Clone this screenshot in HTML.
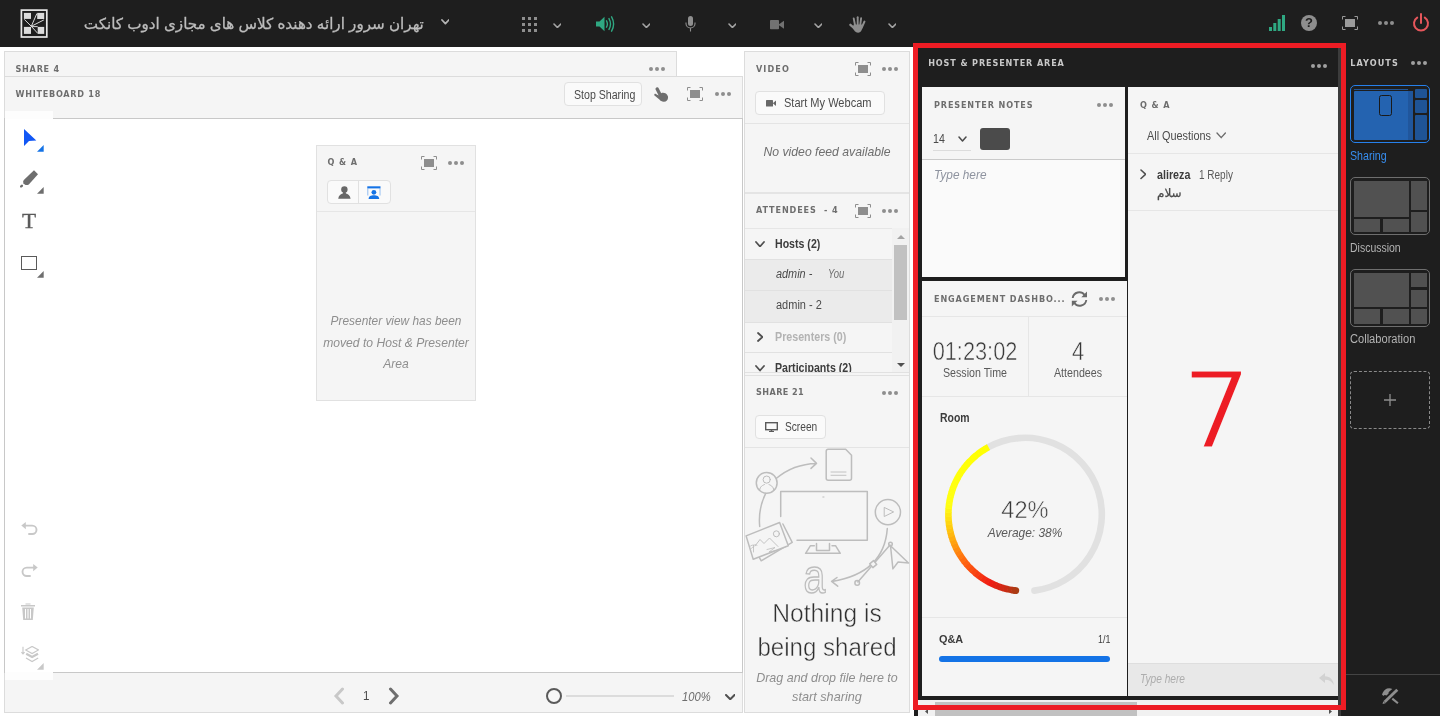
<!DOCTYPE html>
<html><head><meta charset="utf-8"><title>Adobe Connect</title>
<style>
html,body{margin:0;padding:0;}
body{width:1440px;height:716px;overflow:hidden;background:#fff;position:relative;font-family:"Liberation Sans","DejaVu Sans",sans-serif;}
#app{position:absolute;left:0;top:0;width:1440px;height:716px;overflow:hidden;will-change:transform;}
.b{position:absolute;box-sizing:border-box;display:block;}
.t{position:absolute;white-space:nowrap;line-height:1;}
.h{font-weight:bold;}
</style></head><body><div id="app">
<div class="b" style="left:0px;top:0px;width:1440px;height:47px;background:#1e1e1e;"></div>
<svg class="b" style="left:20px;top:9px;" width="28" height="29" viewBox="0 0 28 29"><rect x="1.4" y="1.1" width="25.4" height="26.9" fill="none" stroke="#e8e8e8" stroke-width="1.7"/>
<rect x="3.9" y="3.9" width="7.1" height="6" fill="#dcdcdc"/><rect x="17.200" y="3.900" width="7" height="6.100" fill="#dcdcdc"/>
<rect x="3.900" y="17.900" width="7.100" height="7" fill="#dcdcdc"/><rect x="17.700" y="17.900" width="6.500" height="7" fill="#dcdcdc"/>
<path d="M11.300 17.300L4.300 10.400M11.300 17.300L16.900 4.500M11.300 17.300L23.900 10.900M11.300 17.300L17.700 24.300M11.300 17.600H17.700" stroke="#d8d8d8" stroke-width="1" fill="none"/></svg>
<div class="t " style="left:83.8px;top:16px;font-size:15.15px;color:#bdbdbd;direction:rtl;-webkit-text-stroke:0.3px;">تهران سرور ارائه دهنده کلاس های مجازی ادوب کانکت</div>
<svg class="b" style="left:440.6px;top:19.3px;" width="8.8" height="5.6" viewBox="0 0 8.8 5.6"><path d="M1 1L4.4 4.6L7.8 1" fill="none" stroke="#b4b4b4" stroke-width="1.8" stroke-linecap="round" stroke-linejoin="round"/></svg>
<svg class="b" style="left:522px;top:17px;" width="15" height="15" viewBox="0 0 15 15"><rect x="0" y="0" width="3" height="3" fill="#8e8e8e"/><rect x="0" y="6" width="3" height="3" fill="#8e8e8e"/><rect x="0" y="12" width="3" height="3" fill="#8e8e8e"/><rect x="6" y="0" width="3" height="3" fill="#8e8e8e"/><rect x="6" y="6" width="3" height="3" fill="#8e8e8e"/><rect x="6" y="12" width="3" height="3" fill="#8e8e8e"/><rect x="12" y="0" width="3" height="3" fill="#8e8e8e"/><rect x="12" y="6" width="3" height="3" fill="#8e8e8e"/><rect x="12" y="12" width="3" height="3" fill="#8e8e8e"/></svg>
<svg class="b" style="left:552.7px;top:22.55px;" width="8.8" height="5.5" viewBox="0 0 8.8 5.5"><path d="M1 1L4.4 4.5L7.8 1" fill="none" stroke="#a4a4a4" stroke-width="1.6" stroke-linecap="round" stroke-linejoin="round"/></svg>
<svg class="b" style="left:641.7px;top:22.55px;" width="8.8" height="5.5" viewBox="0 0 8.8 5.5"><path d="M1 1L4.4 4.5L7.8 1" fill="none" stroke="#a4a4a4" stroke-width="1.6" stroke-linecap="round" stroke-linejoin="round"/></svg>
<svg class="b" style="left:727.7px;top:22.55px;" width="8.8" height="5.5" viewBox="0 0 8.8 5.5"><path d="M1 1L4.4 4.5L7.8 1" fill="none" stroke="#a4a4a4" stroke-width="1.6" stroke-linecap="round" stroke-linejoin="round"/></svg>
<svg class="b" style="left:813.7px;top:22.55px;" width="8.8" height="5.5" viewBox="0 0 8.8 5.5"><path d="M1 1L4.4 4.5L7.8 1" fill="none" stroke="#a4a4a4" stroke-width="1.6" stroke-linecap="round" stroke-linejoin="round"/></svg>
<svg class="b" style="left:887.7px;top:22.55px;" width="8.8" height="5.5" viewBox="0 0 8.8 5.5"><path d="M1 1L4.4 4.5L7.8 1" fill="none" stroke="#a4a4a4" stroke-width="1.6" stroke-linecap="round" stroke-linejoin="round"/></svg>
<svg class="b" style="left:596px;top:16px;" width="19" height="16" viewBox="0 0 19 16"><path d="M0 5.5H3.5L8.5 0.8V15.2L3.5 10.5H0Z" fill="#2fa882"/>
<path d="M10.5 4.8Q12.3 8 10.5 11.2M13 2.6Q16 8 13 13.4M15.6 0.8Q19.6 8 15.6 15.2" fill="none" stroke="#2fa882" stroke-width="1.4" stroke-linecap="round"/></svg>
<svg class="b" style="left:685px;top:16px;" width="11" height="16" viewBox="0 0 11 16"><rect x="3" y="0" width="5" height="10" rx="2.5" fill="#8e8e8e"/>
<path d="M1 6.5V7.5A4.5 4.5 0 0 0 10 7.5V6.5M5.5 12V15.5" fill="none" stroke="#8e8e8e" stroke-width="1.1"/></svg>
<svg class="b" style="left:770px;top:19.5px;" width="15" height="10" viewBox="0 0 15 10"><rect x="0" y="0" width="9" height="9.300" rx="0.800" fill="#727272"/><path d="M8.300 4.700L14 0.700V8.700Z" fill="#727272"/></svg>
<svg class="b" style="left:848.5px;top:15.5px;" width="17" height="17" viewBox="0 0 17 17"><g stroke="#8e8e8e" stroke-linecap="round" fill="none"><path d="M1.400 8.800L6 12.800" stroke-width="2.300"/><path d="M4.700 2.400L6.200 10" stroke-width="1.900"/><path d="M8.700 1.300V10" stroke-width="1.900"/><path d="M12.100 2.300L11.100 10" stroke-width="1.900"/><path d="M15.500 5.500L12.800 11.500" stroke-width="1.900"/></g>
<path d="M4.800 8.500L13.500 8.500C14 12.500 12.300 16.700 9 16.700C6.300 16.700 5 14.300 3.500 11.500Z" fill="#8e8e8e"/></svg>
<svg class="b" style="left:1269px;top:15px;" width="17" height="16" viewBox="0 0 17 16"><rect x="0" y="12" width="3" height="4" fill="#2fa882"/><rect x="4.3" y="8" width="3" height="8" fill="#2fa882"/><rect x="8.7" y="4" width="3" height="12" fill="#2fa882"/><rect x="13" y="0" width="3" height="16" fill="#2fa882"/></svg>
<svg class="b" style="left:1301px;top:15px;" width="16" height="16" viewBox="0 0 16 16"><circle cx="8" cy="8" r="8" fill="#8e8e8e"/><text x="8" y="12.3" text-anchor="middle" font-family="Liberation Sans" font-weight="bold" font-size="13" fill="#1e1e1e">?</text></svg>
<svg class="b" style="left:1342px;top:16px;" width="16" height="14" viewBox="0 0 16 14"><path d="M0.5 3.5V0.5H3.5M12.5 0.5H15.5V3.5M15.5 10.5V13.5H12.5M3.5 13.5H0.5V10.5" fill="none" stroke="#9a9a9a" stroke-width="1"/><rect x="3" y="3" width="10" height="8" fill="#9a9a9a"/></svg>
<svg class="b" style="left:1378px;top:21px;" width="16" height="4" viewBox="0 0 16 4"><circle cx="2" cy="2" r="2" fill="#8e8e8e"/><circle cx="8" cy="2" r="2" fill="#8e8e8e"/><circle cx="14" cy="2" r="2" fill="#8e8e8e"/></svg>
<svg class="b" style="left:1412px;top:13px;" width="18" height="19" viewBox="0 0 18 19"><path d="M5.2 4.6A7 7 0 1 0 12.8 4.6" fill="none" stroke="#e5565b" stroke-width="2" stroke-linecap="round"/><path d="M9 1V10" stroke="#e5565b" stroke-width="2" stroke-linecap="round"/></svg>
<div class="b" style="left:4px;top:51px;width:673px;height:27px;background:#f5f5f5;border:1px solid #dcdcdc;border-bottom:none;"></div>
<div class="t h" style="left:15.5px;top:65px;font-size:9px;color:#6e6e6e;letter-spacing:0.751px;font-family:'DejaVu Sans Condensed','DejaVu Sans',sans-serif;">SHARE 4</div>
<svg class="b" style="left:649px;top:67px;" width="16" height="4" viewBox="0 0 16 4"><circle cx="2" cy="2" r="2" fill="#8e8e8e"/><circle cx="8" cy="2" r="2" fill="#8e8e8e"/><circle cx="14" cy="2" r="2" fill="#8e8e8e"/></svg>
<div class="b" style="left:4px;top:76px;width:739px;height:637px;background:#fff;border:1px solid #dcdcdc;"></div>
<div class="b" style="left:5px;top:77px;width:737px;height:41px;background:#f5f5f5;"></div>
<div class="b" style="left:5px;top:118px;width:737px;height:1px;background:#c8c8c8;"></div>
<div class="b" style="left:4px;top:118px;width:1px;height:555px;background:#c8c8c8;"></div>
<div class="b" style="left:742px;top:118px;width:1px;height:555px;background:#c8c8c8;"></div>
<div class="b" style="left:5px;top:111px;width:48px;height:8px;background:#fdfdfd;"></div>
<div class="t h" style="left:15.5px;top:90px;font-size:9px;color:#6e6e6e;letter-spacing:0.741px;font-family:'DejaVu Sans Condensed','DejaVu Sans',sans-serif;">WHITEBOARD 18</div>
<div class="b" style="left:564px;top:82px;width:78px;height:24px;background:#fafafa;border:1px solid #e1e1e1;border-radius:4px;"></div>
<div class="t " style="left:573.5px;top:89px;font-size:12px;color:#4b4b4b;transform:scaleX(0.8834);transform-origin:0 0;">Stop Sharing</div>
<svg class="b" style="left:654px;top:87px;" width="15" height="15" viewBox="0 0 15 15"><path d="M2.2 0.8C3.2 0 4.3 0.4 4.8 1.4L7.2 6.2C9.5 5.2 13 6.4 13.9 9.2C14.6 12 12.8 14.6 10 14.8C8 14.9 6.4 14 5.4 12.6L0.5 8.6C-0.3 7.8 0.8 6.4 1.9 7L4.6 8.6L1.6 2.6C1.2 1.9 1.6 1.2 2.2 0.8Z" fill="#6e6e6e"/></svg>
<svg class="b" style="left:687px;top:87px;" width="16" height="14" viewBox="0 0 16 14"><path d="M0.5 3.5V0.5H3.5M12.5 0.5H15.5V3.5M15.5 10.5V13.5H12.5M3.5 13.5H0.5V10.5" fill="none" stroke="#8e8e8e" stroke-width="1"/><rect x="3" y="3" width="10" height="8" fill="#8e8e8e"/></svg>
<svg class="b" style="left:715px;top:92px;" width="16" height="4" viewBox="0 0 16 4"><circle cx="2" cy="2" r="2" fill="#8e8e8e"/><circle cx="8" cy="2" r="2" fill="#8e8e8e"/><circle cx="14" cy="2" r="2" fill="#8e8e8e"/></svg>
<svg class="b" style="left:24px;top:129px;" width="13" height="18" viewBox="0 0 13 18"><path d="M0 0L12.300 11.500L5 12L0 17Z" fill="#1257f5"/></svg>
<svg class="b" style="left:37.4px;top:145.3px;" width="7" height="7" viewBox="0 0 7 7"><path d="M6.700 0V6.800H0Z" fill="#1473e6"/></svg>
<svg class="b" style="left:20px;top:170px;" width="19" height="18" viewBox="0 0 19 18"><path d="M14 0.300L18 4.300L8.800 14.400Q7 15.600 5 14.800L3.400 13.200Q2.600 11.500 3.800 10Z" fill="#6e6e6e"/><ellipse cx="1.500" cy="16.100" rx="1.700" ry="1.200" transform="rotate(-40 1.500 16.100)" fill="#6e6e6e"/></svg>
<svg class="b" style="left:37.4px;top:187.2px;" width="7" height="7" viewBox="0 0 7 7"><path d="M6.700 0V6.800H0Z" fill="#6e6e6e"/></svg>
<div class="t " style="left:22px;top:211px;font-size:21px;color:#5a5a5a;font-family:'Liberation Serif',serif;transform:scaleX(1.1);transform-origin:0 0;-webkit-text-stroke:0.3px;">T</div>
<div class="b" style="left:21px;top:256px;width:16px;height:14px;border:1.5px solid #5a5a5a;"></div>
<svg class="b" style="left:37.4px;top:271px;" width="7" height="7" viewBox="0 0 7 7"><path d="M6.700 0V6.800H0Z" fill="#6e6e6e"/></svg>
<svg class="b" style="left:21px;top:522px;" width="17" height="13" viewBox="0 0 17 13"><path d="M0.300 3.600L4.800 0V7.200Z" fill="#c8c8c8"/><path d="M4 3.600H11.300A4.200 4.200 0 0 1 11.300 12H7.300" fill="none" stroke="#c8c8c8" stroke-width="1.900"/></svg>
<svg class="b" style="left:21px;top:564px;" width="17" height="13" viewBox="0 0 17 13"><path d="M16.700 3.600L12.200 0V7.200Z" fill="#c8c8c8"/><path d="M13 3.600H5.700A4.200 4.200 0 0 0 5.700 12H9.700" fill="none" stroke="#c8c8c8" stroke-width="1.900"/></svg>
<svg class="b" style="left:21.3px;top:603px;" width="14" height="17" viewBox="0 0 14 17"><path d="M4.5 1.5V0.5H9.5V1.5M0 2H14V3.4H0ZM1.2 4.4H12.8L11.8 17H2.2ZM4 6V15.5H5V6ZM6.5 6V15.5H7.5V6ZM9 6V15.5H10V6Z" fill="#c8c8c8" fill-rule="evenodd"/></svg>
<svg class="b" style="left:20.5px;top:645.5px;" width="18" height="17" viewBox="0 0 18 17"><path d="M2 0.800V8M0.400 6.200L2 8L3.600 6.200" fill="none" stroke="#c8c8c8" stroke-width="1.100"/><path d="M4.700 3.900L11.100 0.400L17.500 3.900L11.100 7.500Z" fill="none" stroke="#c8c8c8" stroke-width="1.100"/><path d="M5.200 7.800L11.100 11L17 7.800" fill="none" stroke="#c8c8c8" stroke-width="2.300"/><path d="M5 12L11.100 15.500L17.200 12" fill="none" stroke="#c8c8c8" stroke-width="1.100"/></svg>
<svg class="b" style="left:37.4px;top:663px;" width="7" height="7" viewBox="0 0 7 7"><path d="M6.700 0V6.800H0Z" fill="#c8c8c8"/></svg>
<div class="b" style="left:5px;top:672px;width:737px;height:40px;background:#f5f5f5;border-top:1px solid #c8c8c8;"></div>
<div class="b" style="left:5px;top:672px;width:48px;height:8px;background:#fdfdfd;"></div>
<svg class="b" style="left:333.3px;top:687.3px;" width="12" height="18" viewBox="0 0 12 18"><path d="M9.500 2L3 9L9.500 16" fill="none" stroke="#c8c8c8" stroke-width="3" stroke-linecap="round" stroke-linejoin="miter"/></svg>
<svg class="b" style="left:388.2px;top:687.3px;" width="12" height="18" viewBox="0 0 12 18"><path d="M2.500 2L9 9L2.500 16" fill="none" stroke="#6e6e6e" stroke-width="3" stroke-linecap="round" stroke-linejoin="miter"/></svg>
<div class="t " style="left:363px;top:690px;font-size:12.5px;color:#4b4b4b;transform:scaleX(0.93);transform-origin:0 0;">1</div>
<svg class="b" style="left:546px;top:688px;" width="16" height="16" viewBox="0 0 16 16"><circle cx="8" cy="8" r="7" fill="#f7f7f7" stroke="#5a5a5a" stroke-width="2"/></svg>
<div class="b" style="left:566px;top:695px;width:108px;height:2px;background:#dcdcdc;"></div>
<div class="t " style="left:681.8px;top:691px;font-size:12.5px;color:#6e6e6e;font-style:italic;transform:scaleX(0.8973);transform-origin:0 0;">100%</div>
<svg class="b" style="left:724.75px;top:693.5500000000001px;" width="10.5" height="6.3" viewBox="0 0 10.5 6.3"><path d="M1 1L5.25 5.3L9.5 1" fill="none" stroke="#505050" stroke-width="2" stroke-linecap="round" stroke-linejoin="round"/></svg>
<div class="b" style="left:316px;top:145px;width:160px;height:256px;background:#f5f5f5;border:1px solid #e1e1e1;"></div>
<div class="t h" style="left:327.5px;top:158px;font-size:9px;color:#6e6e6e;letter-spacing:0.91px;font-family:'DejaVu Sans Condensed','DejaVu Sans',sans-serif;">Q &amp; A</div>
<svg class="b" style="left:421px;top:155.5px;" width="16" height="14" viewBox="0 0 16 14"><path d="M0.5 3.5V0.5H3.5M12.5 0.5H15.5V3.5M15.5 10.5V13.5H12.5M3.5 13.5H0.5V10.5" fill="none" stroke="#8e8e8e" stroke-width="1"/><rect x="3" y="3" width="10" height="8" fill="#8e8e8e"/></svg>
<svg class="b" style="left:448px;top:161px;" width="16" height="4" viewBox="0 0 16 4"><circle cx="2" cy="2" r="2" fill="#8e8e8e"/><circle cx="8" cy="2" r="2" fill="#8e8e8e"/><circle cx="14" cy="2" r="2" fill="#8e8e8e"/></svg>
<div class="b" style="left:327px;top:180px;width:64px;height:23.5px;background:#fafafa;border:1px solid #e1e1e1;border-radius:4px;"></div>
<div class="b" style="left:358px;top:180.5px;width:1px;height:22.5px;background:#e1e1e1;"></div>
<svg class="b" style="left:337.5px;top:185.5px;" width="13" height="13" viewBox="0 0 13 13"><circle cx="6.400" cy="3.500" r="3.200" fill="#686868"/><path d="M0.200 12.700C0.600 9.500 3 8 4.800 7.600L5.200 6H7.600L8 7.600C9.800 8 12.200 9.500 12.600 12.700Z" fill="#686868"/></svg>
<svg class="b" style="left:367px;top:186px;" width="14" height="13.5" viewBox="0 0 14 13.5"><rect x="0.300" y="0.300" width="13.200" height="2.100" fill="#1473e6"/><path d="M0.800 2.400V9.500M13 2.400V9.500" stroke="#1473e6" stroke-opacity="0.450" stroke-width="1" fill="none"/><circle cx="6.900" cy="6.300" r="2.400" fill="#1473e6"/><path d="M1.600 13C1.600 10.200 4 9.300 6.900 9.300S12.200 10.200 12.200 13Z" fill="#1473e6"/></svg>
<div class="b" style="left:317px;top:211px;width:158px;height:1px;background:#e6e6e6;"></div>
<div class="t " style="left:317px;top:314px;font-size:13px;color:#8e8e8e;width:158px;text-align:center;font-style:italic;transform:scaleX(0.9141);transform-origin:50% 0;"><span>Presenter view has been</span></div>
<div class="t " style="left:317px;top:336px;font-size:13px;color:#8e8e8e;width:158px;text-align:center;font-style:italic;transform:scaleX(0.9335);transform-origin:50% 0;"><span>moved to Host &amp; Presenter</span></div>
<div class="t " style="left:317px;top:357px;font-size:13px;color:#8e8e8e;width:158px;text-align:center;font-style:italic;transform:scaleX(0.9283);transform-origin:50% 0;"><span>Area</span></div>
<div class="b" style="left:744px;top:51px;width:166px;height:662px;background:#f5f5f5;border:1px solid #dcdcdc;"></div>
<div class="t h" style="left:756px;top:65px;font-size:9px;color:#6e6e6e;letter-spacing:1.095px;font-family:'DejaVu Sans Condensed','DejaVu Sans',sans-serif;">VIDEO</div>
<svg class="b" style="left:855px;top:61.5px;" width="16" height="14" viewBox="0 0 16 14"><path d="M0.5 3.5V0.5H3.5M12.5 0.5H15.5V3.5M15.5 10.5V13.5H12.5M3.5 13.5H0.5V10.5" fill="none" stroke="#8e8e8e" stroke-width="1"/><rect x="3" y="3" width="10" height="8" fill="#8e8e8e"/></svg>
<svg class="b" style="left:882px;top:67px;" width="16" height="4" viewBox="0 0 16 4"><circle cx="2" cy="2" r="2" fill="#8e8e8e"/><circle cx="8" cy="2" r="2" fill="#8e8e8e"/><circle cx="14" cy="2" r="2" fill="#8e8e8e"/></svg>
<div class="b" style="left:755px;top:91px;width:130px;height:24px;background:#fafafa;border:1px solid #e1e1e1;border-radius:4px;"></div>
<svg class="b" style="left:766px;top:100px;" width="11" height="7" viewBox="0 0 11 7"><rect x="0" y="0" width="7" height="6.500" rx="0.600" fill="#686868"/><path d="M6.800 3.300L10 0.600V6Z" fill="#686868"/></svg>
<div class="t " style="left:783.8px;top:97px;font-size:12px;color:#4b4b4b;transform:scaleX(0.9197);transform-origin:0 0;">Start My Webcam</div>
<div class="b" style="left:745px;top:123px;width:164px;height:1px;background:#e4e4e4;"></div>
<div class="t " style="left:745px;top:145px;font-size:13.5px;color:#6e6e6e;width:164px;text-align:center;font-style:italic;transform:scaleX(0.9062);transform-origin:50% 0;"><span>No video feed available</span></div>
<div class="b" style="left:745px;top:192px;width:164px;height:2px;background:#e4e4e4;"></div>
<div class="t h" style="left:756px;top:206px;font-size:9px;color:#6e6e6e;letter-spacing:0.884px;font-family:'DejaVu Sans Condensed','DejaVu Sans',sans-serif;">ATTENDEES&nbsp; - 4</div>
<svg class="b" style="left:855px;top:204px;" width="16" height="14" viewBox="0 0 16 14"><path d="M0.5 3.5V0.5H3.5M12.5 0.5H15.5V3.5M15.5 10.5V13.5H12.5M3.5 13.5H0.5V10.5" fill="none" stroke="#8e8e8e" stroke-width="1"/><rect x="3" y="3" width="10" height="8" fill="#8e8e8e"/></svg>
<svg class="b" style="left:882px;top:209px;" width="16" height="4" viewBox="0 0 16 4"><circle cx="2" cy="2" r="2" fill="#8e8e8e"/><circle cx="8" cy="2" r="2" fill="#8e8e8e"/><circle cx="14" cy="2" r="2" fill="#8e8e8e"/></svg>
<div class="b" style="left:745px;top:228px;width:147px;height:1px;background:#e6e6e6;"></div>
<div class="b" style="left:892px;top:228px;width:17px;height:144px;background:#f1f1f1;"></div>
<div class="b" style="left:745px;top:259px;width:147px;height:63px;background:#ebebeb;"></div>
<div class="b" style="left:745px;top:259px;width:147px;height:1px;background:#e1e1e1;"></div>
<div class="b" style="left:745px;top:290px;width:147px;height:1px;background:#e1e1e1;"></div>
<div class="b" style="left:745px;top:322px;width:147px;height:1px;background:#e1e1e1;"></div>
<div class="b" style="left:745px;top:352px;width:147px;height:1px;background:#e1e1e1;"></div>
<svg class="b" style="left:755.0px;top:240.75px;" width="10" height="6.5" viewBox="0 0 10 6.5"><path d="M1 1L5.0 5.5L9 1" fill="none" stroke="#505050" stroke-width="1.8" stroke-linecap="round" stroke-linejoin="round"/></svg>
<div class="t " style="left:774.7px;top:238px;font-size:12px;color:#3c3c3c;font-weight:bold;transform:scaleX(0.8823);transform-origin:0 0;">Hosts (2)</div>
<div class="t " style="left:775.5px;top:268px;font-size:12px;color:#4b4b4b;font-style:italic;transform:scaleX(0.9071);transform-origin:0 0;">admin -</div>
<div class="t " style="left:827.5px;top:268px;font-size:12px;color:#6e6e6e;font-style:italic;transform:scaleX(0.7922);transform-origin:0 0;">You</div>
<div class="t " style="left:775.5px;top:299px;font-size:12px;color:#4b4b4b;transform:scaleX(0.9174);transform-origin:0 0;">admin - 2</div>
<svg class="b" style="left:756.75px;top:332.0px;" width="6.5" height="10" viewBox="0 0 6.5 10"><path d="M1 1L5.5 5.0L1 9" fill="none" stroke="#505050" stroke-width="1.8" stroke-linecap="round" stroke-linejoin="round"/></svg>
<div class="t " style="left:774.7px;top:331px;font-size:12px;color:#b3b3b3;font-weight:bold;transform:scaleX(0.8907);transform-origin:0 0;">Presenters (0)</div>
<div class="b" style="left:745px;top:353px;width:147px;height:20px;overflow:hidden;">
<div class="t" style="left:29.7px;top:9px;font-size:12px;color:#3c3c3c;font-weight:bold;transform:scaleX(0.885);transform-origin:0 0;">Participants (2)</div>
<svg class="b" style="left:10px;top:11.5px" width="10" height="7" viewBox="0 0 10 7"><path d="M1 1L5 5.5L9 1" fill="none" stroke="#505050" stroke-width="1.8" stroke-linecap="round" stroke-linejoin="round"/></svg>
</div>
<svg class="b" style="left:897px;top:235px;" width="8" height="4" viewBox="0 0 8 4"><path d="M0 4L4 0L8 4Z" fill="#a3a3a3"/></svg>
<svg class="b" style="left:897px;top:363px;" width="8" height="4" viewBox="0 0 8 4"><path d="M0 0L4 4L8 0Z" fill="#505050"/></svg>
<div class="b" style="left:894px;top:245px;width:13px;height:75px;background:#c1c1c1;"></div>
<div class="b" style="left:745px;top:372px;width:164px;height:1px;background:#e1e1e1;"></div>
<div class="b" style="left:745px;top:375px;width:164px;height:1px;background:#e1e1e1;"></div>
<div class="t h" style="left:756px;top:388px;font-size:9px;color:#6e6e6e;letter-spacing:0.424px;font-family:'DejaVu Sans Condensed','DejaVu Sans',sans-serif;">SHARE 21</div>
<svg class="b" style="left:882px;top:390.5px;" width="16" height="4" viewBox="0 0 16 4"><circle cx="2" cy="2" r="2" fill="#8e8e8e"/><circle cx="8" cy="2" r="2" fill="#8e8e8e"/><circle cx="14" cy="2" r="2" fill="#8e8e8e"/></svg>
<div class="b" style="left:755px;top:415px;width:70.5px;height:24px;background:#fafafa;border:1px solid #e1e1e1;border-radius:4px;"></div>
<svg class="b" style="left:765px;top:422px;" width="13" height="10" viewBox="0 0 13 10"><rect x="0.7" y="0.7" width="11.600" height="7" fill="none" stroke="#5a5a5a" stroke-width="1.400"/><path d="M4 9.5H9" stroke="#5a5a5a" stroke-width="1.2"/><path d="M6.500 7.500V9.500" stroke="#5a5a5a" stroke-width="1.4"/></svg>
<div class="t " style="left:785px;top:421px;font-size:12px;color:#4b4b4b;transform:scaleX(0.8467);transform-origin:0 0;">Screen</div>
<div class="b" style="left:745px;top:447px;width:164px;height:1px;background:#e4e4e4;"></div>
<div class="t " style="left:745px;top:600px;font-size:26.5px;color:#303030;width:164px;text-align:center;transform:scaleX(0.9283);transform-origin:50% 0;-webkit-text-stroke:0.5px #f5f5f5;"><span>Nothing is</span></div>
<div class="t " style="left:745px;top:634px;font-size:26.5px;color:#303030;width:164px;text-align:center;transform:scaleX(0.9084);transform-origin:50% 0;-webkit-text-stroke:0.5px #f5f5f5;"><span>being shared</span></div>
<div class="t " style="left:745px;top:671px;font-size:13px;color:#8e8e8e;width:164px;text-align:center;font-style:italic;transform:scaleX(0.9604);transform-origin:50% 0;"><span>Drag and drop file here to</span></div>
<div class="t " style="left:745px;top:690px;font-size:13px;color:#8e8e8e;width:164px;text-align:center;font-style:italic;transform:scaleX(0.9756);transform-origin:50% 0;"><span>start sharing</span></div>
<svg class="b" style="left:745px;top:445px;" width="165" height="155" viewBox="0 0 165 155"><g fill="none" stroke="#bdbdbd" stroke-width="1.5" stroke-linecap="round" stroke-linejoin="round">
<path d="M83.2 4.3H100.7L106.500 10.200V33.300Q106.500 35.300 104.500 35.300H83.200Q81.200 35.300 81.200 33.300V6.300Q81.200 4.300 83.200 4.300Z"/>
<path d="M86 27H101M86 30.300H101" stroke-width="0.9"/>
<circle cx="21.700" cy="37.900" r="10.400"/>
<circle cx="21.700" cy="34.600" r="3.600" stroke-width="1"/>
<path d="M14.600 45.200C15 41 18 40.300 19.500 39.500M28.800 45.200C28.400 41 25.400 40.300 23.900 39.500" stroke-width="1"/>
<path d="M31.200 33.500Q48 19 71.500 18.400M66 13L71.500 18.400L66 23.400"/>
<path d="M20.600 48.600Q13 64 14.700 81.500"/>
<path d="M35.700 71.500V46.600H122.300V95.300H52"/>
<path d="M77.800 52H79" stroke-width="1"/>
<path d="M71.500 98.500V105.500H84.500V98.500M69.300 100.700H65.500L60.600 108.300H95.300L90.500 100.700H87"/>
<circle cx="142.900" cy="67.100" r="12.600"/>
<path d="M139.200 62.800V71.500L148.300 67.100Z" stroke-width="1"/>
<path d="M142.300 83.600Q139 128 87 136.400M92 132.500L86.600 136.400L92.700 141.200"/>
<path d="M112.800 137L145 100"/>
<circle cx="112.200" cy="137.900" r="2.300"/>
<circle cx="145.500" cy="99" r="1.800"/>
<rect x="125.700" y="116.600" width="5" height="5" transform="rotate(-40 128.200 119.100)" fill="#f5f5f5"/>
<path d="M145.500 100.700L163.500 118L153.100 117L147.900 123.900Z" fill="#f5f5f5"/>
<path d="M37.900 79L47.200 97.400L16.200 115.800L13 110" />
<path d="M1.100 90.900L34.600 77.500L43.300 100.700L8.200 114.300Z" fill="#f5f5f5"/>
<circle cx="31.400" cy="88.800" r="3" stroke-width="1"/>
<path d="M10 101L15 94.500L19 98.500L24.500 93L33 101.500" stroke-width="0.9"/>
<path d="M8.500 107V100M5.500 101Q7.500 99.300 8.500 100.500Q10 98.800 12 100.200M6.200 103.500Q7.500 101.500 8.500 102" stroke-width="0.8"/>
<path d="M22 104.500L30 102.500L24 107L33 105" stroke-width="0.8"/>
</g>
<text transform="translate(58.6 148.300) scale(0.800 1)" x="0" y="0" font-family="Liberation Sans, sans-serif" font-size="49" fill="none" stroke="#bdbdbd" stroke-width="1.500">a</text></svg>
<div class="b" style="left:914px;top:47px;width:432px;height:669px;background:#1e1e1e;"></div>
<div class="b" style="left:1338px;top:47px;width:3px;height:669px;background:#3c3c3c;"></div>
<div class="t h" style="left:928.2px;top:59px;font-size:9px;color:#c8c8c8;letter-spacing:0.887px;font-family:'DejaVu Sans Condensed','DejaVu Sans',sans-serif;">HOST &amp; PRESENTER AREA</div>
<svg class="b" style="left:1311px;top:64px;" width="16" height="4" viewBox="0 0 16 4"><circle cx="2" cy="2" r="2" fill="#a0a0a0"/><circle cx="8" cy="2" r="2" fill="#a0a0a0"/><circle cx="14" cy="2" r="2" fill="#a0a0a0"/></svg>
<div class="b" style="left:922px;top:87px;width:203px;height:190px;background:#f5f5f5;"></div>
<div class="t h" style="left:934px;top:101px;font-size:9px;color:#6e6e6e;letter-spacing:0.857px;font-family:'DejaVu Sans Condensed','DejaVu Sans',sans-serif;">PRESENTER NOTES</div>
<svg class="b" style="left:1097px;top:103px;" width="16" height="4" viewBox="0 0 16 4"><circle cx="2" cy="2" r="2" fill="#8e8e8e"/><circle cx="8" cy="2" r="2" fill="#8e8e8e"/><circle cx="14" cy="2" r="2" fill="#8e8e8e"/></svg>
<div class="t " style="left:933px;top:133px;font-size:12.5px;color:#4b4b4b;transform:scaleX(0.8485);transform-origin:0 0;">14</div>
<svg class="b" style="left:957.5px;top:136.2px;" width="9" height="6" viewBox="0 0 9 6"><path d="M1 1L4.5 5L8 1" fill="none" stroke="#4b4b4b" stroke-width="1.5" stroke-linecap="round" stroke-linejoin="round"/></svg>
<div class="b" style="left:933px;top:150px;width:38px;height:1px;background:#dcdcdc;"></div>
<div class="b" style="left:980px;top:128px;width:30px;height:22px;background:#4b4b4b;border-radius:3px;"></div>
<div class="b" style="left:922px;top:159px;width:203px;height:1px;background:#cacaca;"></div>
<div class="b" style="left:922px;top:160px;width:203px;height:117px;background:#fafafa;"></div>
<div class="t " style="left:933.5px;top:168px;font-size:13px;color:#8e939f;font-style:italic;transform:scaleX(0.9118);transform-origin:0 0;">Type here</div>
<div class="b" style="left:922px;top:281px;width:205px;height:415px;background:#f5f5f5;"></div>
<div class="t h" style="left:934px;top:295px;font-size:9px;color:#6e6e6e;letter-spacing:0.879px;font-family:'DejaVu Sans Condensed','DejaVu Sans',sans-serif;">ENGAGEMENT DASHBO...</div>
<svg class="b" style="left:1071.3px;top:291px;" width="17" height="16" viewBox="0 0 17 16"><path d="M1.700 7A6.600 6.600 0 0 1 13.600 4" fill="none" stroke="#6a6a6a" stroke-width="1.900"/><path d="M16 0.500V6.200H10.300Z" fill="#6a6a6a"/><path d="M15.300 9A6.600 6.600 0 0 1 3.400 12" fill="none" stroke="#6a6a6a" stroke-width="1.900"/><path d="M0.800 15.500V9.800H6.500Z" fill="#6a6a6a"/></svg>
<svg class="b" style="left:1098.8px;top:297px;" width="16" height="4" viewBox="0 0 16 4"><circle cx="2" cy="2" r="2" fill="#8e8e8e"/><circle cx="8" cy="2" r="2" fill="#8e8e8e"/><circle cx="14" cy="2" r="2" fill="#8e8e8e"/></svg>
<div class="b" style="left:922px;top:316px;width:205px;height:1px;background:#e6e6e6;"></div>
<div class="b" style="left:1028px;top:316px;width:1px;height:80px;background:#e6e6e6;"></div>
<div class="b" style="left:922px;top:396px;width:205px;height:1px;background:#e6e6e6;"></div>
<div class="t " style="left:922px;top:339px;font-size:25.5px;color:#383838;width:106px;text-align:center;transform:scaleX(0.8533);transform-origin:50% 0;-webkit-text-stroke:0.5px #f5f5f5;"><span>01:23:02</span></div>
<div class="t " style="left:922px;top:367px;font-size:12px;color:#5a5a5a;width:106px;text-align:center;transform:scaleX(0.8885);transform-origin:50% 0;"><span>Session Time</span></div>
<div class="t " style="left:1029px;top:339px;font-size:25.5px;color:#383838;width:98px;text-align:center;transform:scaleX(0.86);transform-origin:50% 0;-webkit-text-stroke:0.5px #f5f5f5;">4</div>
<div class="t " style="left:1029px;top:367px;font-size:12px;color:#5a5a5a;width:98px;text-align:center;transform:scaleX(0.8918);transform-origin:50% 0;"><span>Attendees</span></div>
<div class="t " style="left:939.5px;top:412px;font-size:12px;color:#3c3c3c;font-weight:bold;transform:scaleX(0.8706);transform-origin:0 0;">Room</div>
<svg class="b" style="left:0;top:0" width="1440" height="716" viewBox="0 0 1440 716"><path d="M987.92 447.42A76.7 76.7 0 1 1 1034.45 590.63" fill="none" stroke="#e1e1e1" stroke-width="6.6" stroke-linecap="round"/><path d="M1015.89 590.64A76.7 76.7 0 0 1 1015.22 590.56" fill="none" stroke="#a83c14" stroke-width="6.6" stroke-linecap="round"/><path d="M1015.89 590.64A76.7 76.7 0 0 1 1011.37 589.96" fill="none" stroke="#af3914" stroke-width="6.6" stroke-linecap="butt"/><path d="M1011.90 590.06A76.7 76.7 0 0 1 1007.42 589.14" fill="none" stroke="#bc3214" stroke-width="6.6" stroke-linecap="butt"/><path d="M1007.94 589.26A76.7 76.7 0 0 1 1003.52 588.10" fill="none" stroke="#c92c14" stroke-width="6.6" stroke-linecap="butt"/><path d="M1004.04 588.25A76.7 76.7 0 0 1 999.69 586.87" fill="none" stroke="#d22814" stroke-width="6.6" stroke-linecap="butt"/><path d="M1000.19 587.04A76.7 76.7 0 0 1 995.92 585.43" fill="none" stroke="#db2414" stroke-width="6.6" stroke-linecap="butt"/><path d="M996.41 585.63A76.7 76.7 0 0 1 992.23 583.80" fill="none" stroke="#e52114" stroke-width="6.6" stroke-linecap="butt"/><path d="M992.72 584.03A76.7 76.7 0 0 1 988.63 581.98" fill="none" stroke="#ee1d14" stroke-width="6.6" stroke-linecap="butt"/><path d="M989.11 582.23A76.7 76.7 0 0 1 985.14 579.97" fill="none" stroke="#f22314" stroke-width="6.6" stroke-linecap="butt"/><path d="M985.60 580.24A76.7 76.7 0 0 1 981.75 577.78" fill="none" stroke="#f32c13" stroke-width="6.6" stroke-linecap="butt"/><path d="M982.20 578.08A76.7 76.7 0 0 1 978.49 575.41" fill="none" stroke="#f53513" stroke-width="6.6" stroke-linecap="butt"/><path d="M978.91 575.74A76.7 76.7 0 0 1 975.35 572.88" fill="none" stroke="#f73d12" stroke-width="6.6" stroke-linecap="butt"/><path d="M975.76 573.22A76.7 76.7 0 0 1 972.35 570.18" fill="none" stroke="#f94612" stroke-width="6.6" stroke-linecap="butt"/><path d="M972.74 570.55A76.7 76.7 0 0 1 969.50 567.33" fill="none" stroke="#fb4f11" stroke-width="6.6" stroke-linecap="butt"/><path d="M969.87 567.72A76.7 76.7 0 0 1 966.80 564.34" fill="none" stroke="#fd5810" stroke-width="6.6" stroke-linecap="butt"/><path d="M967.15 564.74A76.7 76.7 0 0 1 964.26 561.21" fill="none" stroke="#ff6110" stroke-width="6.6" stroke-linecap="butt"/><path d="M964.59 561.63A76.7 76.7 0 0 1 961.89 557.94" fill="none" stroke="#ff6c10" stroke-width="6.6" stroke-linecap="butt"/><path d="M962.19 558.38A76.7 76.7 0 0 1 959.69 554.56" fill="none" stroke="#ff7710" stroke-width="6.6" stroke-linecap="butt"/><path d="M959.98 555.02A76.7 76.7 0 0 1 957.68 551.07" fill="none" stroke="#ff8210" stroke-width="6.6" stroke-linecap="butt"/><path d="M957.94 551.54A76.7 76.7 0 0 1 955.85 547.47" fill="none" stroke="#ff8c10" stroke-width="6.6" stroke-linecap="butt"/><path d="M956.08 547.96A76.7 76.7 0 0 1 954.21 543.79" fill="none" stroke="#ff9710" stroke-width="6.6" stroke-linecap="butt"/><path d="M954.42 544.28A76.7 76.7 0 0 1 952.77 540.02" fill="none" stroke="#ffa210" stroke-width="6.6" stroke-linecap="butt"/><path d="M952.95 540.53A76.7 76.7 0 0 1 951.53 536.19" fill="none" stroke="#ffad10" stroke-width="6.6" stroke-linecap="butt"/><path d="M951.68 536.70A76.7 76.7 0 0 1 950.49 532.29" fill="none" stroke="#ffb810" stroke-width="6.6" stroke-linecap="butt"/><path d="M950.62 532.81A76.7 76.7 0 0 1 949.66 528.35" fill="none" stroke="#ffc310" stroke-width="6.6" stroke-linecap="butt"/><path d="M949.76 528.87A76.7 76.7 0 0 1 949.04 524.36" fill="none" stroke="#ffcd10" stroke-width="6.6" stroke-linecap="butt"/><path d="M949.11 524.89A76.7 76.7 0 0 1 948.62 520.35" fill="none" stroke="#ffd611" stroke-width="6.6" stroke-linecap="butt"/><path d="M948.67 520.88A76.7 76.7 0 0 1 948.42 516.32" fill="none" stroke="#ffe012" stroke-width="6.6" stroke-linecap="butt"/><path d="M948.44 516.86A76.7 76.7 0 0 1 948.43 512.29" fill="none" stroke="#ffe912" stroke-width="6.6" stroke-linecap="butt"/><path d="M948.42 512.83A76.7 76.7 0 0 1 948.65 508.27" fill="none" stroke="#fff313" stroke-width="6.6" stroke-linecap="butt"/><path d="M948.61 508.80A76.7 76.7 0 0 1 949.09 504.26" fill="none" stroke="#fffd14" stroke-width="6.6" stroke-linecap="butt"/><path d="M949.02 504.79A76.7 76.7 0 0 1 949.73 500.28" fill="none" stroke="#ffff13" stroke-width="6.6" stroke-linecap="butt"/><path d="M949.63 500.80A76.7 76.7 0 0 1 950.58 496.33" fill="none" stroke="#ffff12" stroke-width="6.6" stroke-linecap="butt"/><path d="M950.46 496.86A76.7 76.7 0 0 1 951.64 492.44" fill="none" stroke="#ffff11" stroke-width="6.6" stroke-linecap="butt"/><path d="M951.49 492.96A76.7 76.7 0 0 1 952.90 488.61" fill="none" stroke="#ffff10" stroke-width="6.6" stroke-linecap="butt"/><path d="M952.72 489.12A76.7 76.7 0 0 1 954.36 484.85" fill="none" stroke="#ffff0f" stroke-width="6.6" stroke-linecap="butt"/><path d="M954.16 485.35A76.7 76.7 0 0 1 956.02 481.18" fill="none" stroke="#ffff0e" stroke-width="6.6" stroke-linecap="butt"/><path d="M955.79 481.66A76.7 76.7 0 0 1 957.86 477.59" fill="none" stroke="#ffff0d" stroke-width="6.6" stroke-linecap="butt"/><path d="M957.61 478.06A76.7 76.7 0 0 1 959.90 474.11" fill="none" stroke="#ffff0c" stroke-width="6.6" stroke-linecap="butt"/><path d="M959.62 474.57A76.7 76.7 0 0 1 962.11 470.74" fill="none" stroke="#ffff0a" stroke-width="6.6" stroke-linecap="butt"/><path d="M961.80 471.18A76.7 76.7 0 0 1 964.50 467.49" fill="none" stroke="#ffff09" stroke-width="6.6" stroke-linecap="butt"/><path d="M964.17 467.91A76.7 76.7 0 0 1 967.05 464.37" fill="none" stroke="#ffff08" stroke-width="6.6" stroke-linecap="butt"/><path d="M966.70 464.78A76.7 76.7 0 0 1 969.76 461.39" fill="none" stroke="#ffff07" stroke-width="6.6" stroke-linecap="butt"/><path d="M969.39 461.78A76.7 76.7 0 0 1 972.63 458.55" fill="none" stroke="#ffff06" stroke-width="6.6" stroke-linecap="butt"/><path d="M972.24 458.92A76.7 76.7 0 0 1 975.64 455.87" fill="none" stroke="#ffff05" stroke-width="6.6" stroke-linecap="butt"/><path d="M975.24 456.22A76.7 76.7 0 0 1 978.79 453.36" fill="none" stroke="#ffff04" stroke-width="6.6" stroke-linecap="butt"/><path d="M978.37 453.68A76.7 76.7 0 0 1 982.07 451.01" fill="none" stroke="#ffff03" stroke-width="6.6" stroke-linecap="butt"/><path d="M981.63 451.31A76.7 76.7 0 0 1 985.47 448.83" fill="none" stroke="#ffff02" stroke-width="6.6" stroke-linecap="butt"/><path d="M985.01 449.11A76.7 76.7 0 0 1 988.50 447.09" fill="none" stroke="#ffff01" stroke-width="6.6" stroke-linecap="butt"/></svg>
<div class="t " style="left:922px;top:498px;font-size:24px;color:#383838;width:206px;text-align:center;transform:scaleX(0.9845);transform-origin:50% 0;-webkit-text-stroke:0.5px #f5f5f5;"><span>42%</span></div>
<div class="t " style="left:922px;top:526px;font-size:13px;color:#5a5a5a;width:206px;text-align:center;font-style:italic;transform:scaleX(0.9173);transform-origin:50% 0;"><span>Average: 38%</span></div>
<div class="b" style="left:922px;top:617px;width:205px;height:1px;background:#e6e6e6;"></div>
<div class="t " style="left:939px;top:634px;font-size:11.5px;color:#3c3c3c;font-weight:bold;transform:scaleX(0.9467);transform-origin:0 0;">Q&amp;A</div>
<div class="t " style="left:1060px;top:634px;font-size:11px;color:#3c3c3c;width:50.5px;text-align:right;transform:scaleX(0.8106);transform-origin:100% 0;"><span>1/1</span></div>
<div class="b" style="left:939px;top:656px;width:171px;height:6px;background:#1473e6;border-radius:3px;"></div>
<div class="b" style="left:1128px;top:87px;width:210px;height:609px;background:#f5f5f5;"></div>
<div class="t h" style="left:1140px;top:101px;font-size:9px;color:#6e6e6e;letter-spacing:0.91px;font-family:'DejaVu Sans Condensed','DejaVu Sans',sans-serif;">Q &amp; A</div>
<div class="t " style="left:1147px;top:130px;font-size:12.5px;color:#4b4b4b;transform:scaleX(0.8689);transform-origin:0 0;">All Questions</div>
<svg class="b" style="left:1216.1px;top:132.35px;" width="10.4" height="6.7" viewBox="0 0 10.4 6.7"><path d="M1 1L5.2 5.7L9.4 1" fill="none" stroke="#6a6a6a" stroke-width="1.3" stroke-linecap="round" stroke-linejoin="round"/></svg>
<div class="b" style="left:1128px;top:153px;width:210px;height:1px;background:#e6e6e6;"></div>
<svg class="b" style="left:1139.95px;top:169.05px;" width="6.5" height="10.5" viewBox="0 0 6.5 10.5"><path d="M1 1L5.5 5.25L1 9.5" fill="none" stroke="#505050" stroke-width="1.6" stroke-linecap="round" stroke-linejoin="round"/></svg>
<div class="t " style="left:1157px;top:169px;font-size:12px;color:#3c3c3c;font-weight:bold;transform:scaleX(0.894);transform-origin:0 0;">alireza</div>
<div class="t " style="left:1198.5px;top:169px;font-size:12px;color:#5a5a5a;transform:scaleX(0.8332);transform-origin:0 0;">1 Reply</div>
<div class="t " style="left:1157px;top:187px;font-size:12px;color:#4b4b4b;-webkit-text-stroke:0.25px;">سلام</div>
<div class="b" style="left:1128px;top:210px;width:210px;height:1px;background:#e6e6e6;"></div>
<div class="t " style="left:1180.5px;top:357px;font-size:107.4px;color:#ed1c24;transform:scaleX(1.04);transform-origin:0 0;font-family:'DejaVu Sans',sans-serif;-webkit-text-stroke:3px #f5f5f5;">7</div>
<div class="b" style="left:1128px;top:663px;width:210px;height:33px;background:#e8e8e8;border-top:1px solid #dedede;"></div>
<div class="t " style="left:1139.5px;top:673px;font-size:12px;color:#adadad;font-style:italic;transform:scaleX(0.8468);transform-origin:0 0;">Type here</div>
<svg class="b" style="left:1319px;top:673px;" width="15" height="12" viewBox="0 0 15 12"><path d="M6 0L0 5L6 10V6.800C10 6.800 13 8.500 14.800 12C14.500 7 11.500 3.500 6 3.200Z" fill="#d2d2d2"/></svg>
<div class="b" style="left:918px;top:700px;width:420px;height:16px;background:#f1f1f1;"></div>
<div class="b" style="left:935px;top:702px;width:202px;height:14px;background:#c1c1c1;"></div>
<svg class="b" style="left:925px;top:709px;" width="3" height="5" viewBox="0 0 3 5"><path d="M3 0L0 2.500L3 5Z" fill="#505050"/></svg>
<svg class="b" style="left:1329px;top:709px;" width="3" height="5" viewBox="0 0 3 5"><path d="M0 0L3 2.500L0 5Z" fill="#505050"/></svg>
<div class="b" style="left:1346px;top:47px;width:94px;height:669px;background:#1e1e1e;"></div>
<div class="t h" style="left:1350.3px;top:59px;font-size:9px;color:#c8c8c8;letter-spacing:1.096px;font-family:'DejaVu Sans Condensed','DejaVu Sans',sans-serif;">LAYOUTS</div>
<svg class="b" style="left:1410.5px;top:61px;" width="16" height="4" viewBox="0 0 16 4"><circle cx="2" cy="2" r="2" fill="#a0a0a0"/><circle cx="8" cy="2" r="2" fill="#a0a0a0"/><circle cx="14" cy="2" r="2" fill="#a0a0a0"/></svg>
<div class="b" style="left:1350px;top:85px;width:80px;height:57.5px;border:1px solid #2680eb;border-radius:5px;background:#1e1e1e;"></div>
<div class="b" style="left:1354px;top:91px;width:59px;height:49px;background:#2463b0;border-radius:1px;"></div>
<div class="b" style="left:1408px;top:91px;width:5px;height:49px;background:#20569c;"></div>
<div class="b" style="left:1354px;top:89px;width:54px;height:1px;background:#2463b0;opacity:0.8;"></div>
<div class="b" style="left:1415px;top:89px;width:12px;height:9px;background:#1f5496;border-radius:1px;"></div>
<div class="b" style="left:1415px;top:100px;width:12px;height:13px;background:#1f5496;border-radius:1px;"></div>
<div class="b" style="left:1415px;top:115px;width:12px;height:25px;background:#1f5496;border-radius:1px;"></div>
<div class="b" style="left:1379px;top:95px;width:13px;height:21px;border:1.2px solid #1a1a1a;border-radius:2.5px;"></div>
<div class="t " style="left:1350.3px;top:150px;font-size:12px;color:#378ef0;transform:scaleX(0.887);transform-origin:0 0;">Sharing</div>
<div class="b" style="left:1350px;top:177px;width:80px;height:58px;border:1px solid #6e6e6e;border-radius:5px;"></div>
<div class="b" style="left:1353.8px;top:181px;width:55.2px;height:35.5px;background:#515151;"></div>
<div class="b" style="left:1411.3px;top:181px;width:15.7px;height:28.8px;background:#515151;"></div>
<div class="b" style="left:1411.3px;top:212px;width:15.7px;height:19.8px;background:#515151;"></div>
<div class="b" style="left:1353.8px;top:219px;width:26.4px;height:12.8px;background:#515151;"></div>
<div class="b" style="left:1383px;top:219px;width:26px;height:12.8px;background:#515151;"></div>
<div class="t " style="left:1350.3px;top:242px;font-size:12px;color:#b3b3b3;transform:scaleX(0.8737);transform-origin:0 0;">Discussion</div>
<div class="b" style="left:1350px;top:269px;width:80px;height:58px;border:1px solid #6e6e6e;border-radius:5px;"></div>
<div class="b" style="left:1353.8px;top:273px;width:55.2px;height:33.6px;background:#515151;"></div>
<div class="b" style="left:1411.3px;top:273px;width:15.7px;height:14.2px;background:#515151;"></div>
<div class="b" style="left:1411.3px;top:290.2px;width:15.7px;height:16.4px;background:#515151;"></div>
<div class="b" style="left:1353.8px;top:309.2px;width:26.4px;height:14.8px;background:#515151;"></div>
<div class="b" style="left:1383px;top:309.2px;width:26px;height:14.8px;background:#515151;"></div>
<div class="b" style="left:1411.3px;top:309.2px;width:15.7px;height:14.8px;background:#515151;"></div>
<div class="t " style="left:1350.3px;top:333px;font-size:12px;color:#b3b3b3;transform:scaleX(0.9248);transform-origin:0 0;">Collaboration</div>
<div class="b" style="left:1350px;top:370.5px;width:80px;height:58px;border:1px dashed #8a8a8a;border-radius:4px;"></div>
<svg class="b" style="left:1384px;top:394px;" width="12" height="12" viewBox="0 0 12 12"><path d="M6 0V12M0 6H12" stroke="#8e8e8e" stroke-width="1.300"/></svg>
<div class="b" style="left:1346px;top:674px;width:94px;height:1px;background:#444;"></div>
<svg class="b" style="left:1381px;top:687px;" width="18" height="18" viewBox="0 0 18 18"><path d="M16.300 2.800L3.600 15" stroke="#8e8e8e" stroke-width="2.900" fill="none"/><path d="M1.600 17L2.200 14.300L4.600 16.300Z" fill="#8e8e8e"/><path d="M11.300 11.600L16.900 16.200" stroke="#8e8e8e" stroke-width="2.100" fill="none"/><path d="M1 7.500Q2.500 3 6 1.500Q9 0.600 11.300 2L8.600 4.200Q7 5.300 7.600 6.600L5.500 8.600Q3.600 7.200 2.400 9Z" fill="#8e8e8e"/></svg>
<div class="b" style="left:913px;top:43px;width:433px;height:667px;border:5px solid #ed1c24;"></div>
</div></body></html>
